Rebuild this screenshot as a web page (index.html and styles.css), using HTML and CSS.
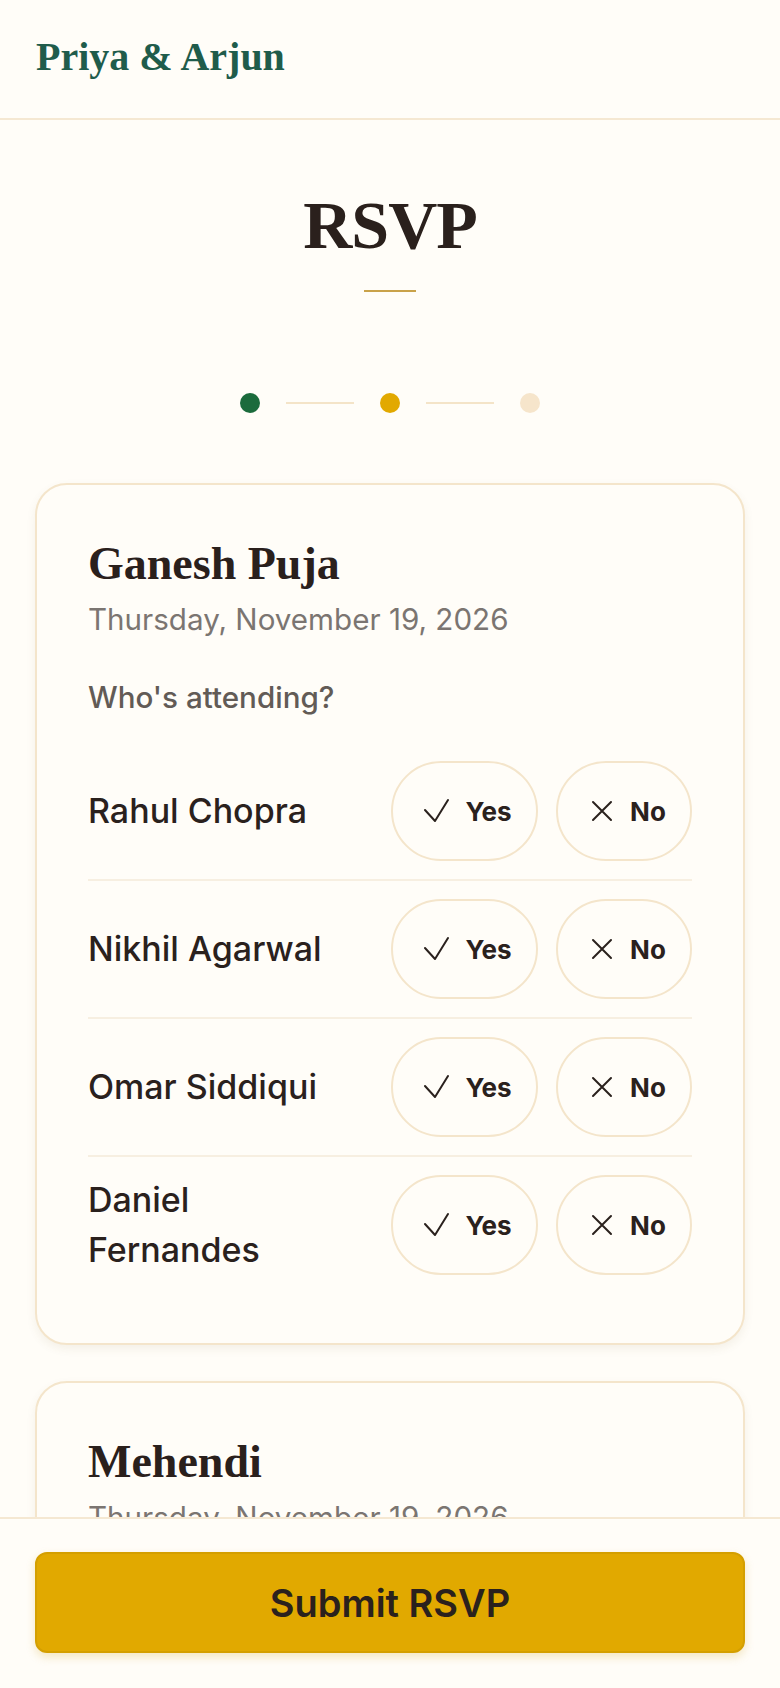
FILE: index.html
```html
<!DOCTYPE html>
<html lang="en">
<head>
<meta charset="utf-8">
<title>RSVP – Priya &amp; Arjun</title>
<link rel="stylesheet" href="styles.css">
</head>
<body>
<div class="app">
<header class="site-header">
  <div class="brand">Priya &amp; Arjun</div>
</header>

<main class="page">
  <section class="intro">
    <h1 class="page-title">RSVP</h1>
    <div class="title-rule"></div>
    <div class="steps">
      <span class="dot dot-done"></span>
      <span class="step-line"></span>
      <span class="dot dot-current"></span>
      <span class="step-line"></span>
      <span class="dot dot-todo"></span>
    </div>
  </section>

  <section class="card">
    <h2 class="event-name">Ganesh Puja</h2>
    <div class="event-date">Thursday, November 19, 2026</div>
    <div class="who">Who's attending?</div>
    <div class="guests">
      <div class="guest">
        <div class="guest-name">Rahul Chopra</div>
        <div class="choices">
          <button class="choice choice-yes"><svg class="ico" viewBox="0 0 26 26" width="26" height="26"><path d="M1 12 L11 23 L24 2"/></svg><span>Yes</span></button>
          <button class="choice choice-no"><svg class="ico" viewBox="0 0 26 26" width="26" height="26"><path d="M4 4 L22 22 M22 4 L4 22"/></svg><span>No</span></button>
        </div>
      </div>
      <div class="guest">
        <div class="guest-name">Nikhil Agarwal</div>
        <div class="choices">
          <button class="choice choice-yes"><svg class="ico" viewBox="0 0 26 26" width="26" height="26"><path d="M1 12 L11 23 L24 2"/></svg><span>Yes</span></button>
          <button class="choice choice-no"><svg class="ico" viewBox="0 0 26 26" width="26" height="26"><path d="M4 4 L22 22 M22 4 L4 22"/></svg><span>No</span></button>
        </div>
      </div>
      <div class="guest">
        <div class="guest-name">Omar Siddiqui</div>
        <div class="choices">
          <button class="choice choice-yes"><svg class="ico" viewBox="0 0 26 26" width="26" height="26"><path d="M1 12 L11 23 L24 2"/></svg><span>Yes</span></button>
          <button class="choice choice-no"><svg class="ico" viewBox="0 0 26 26" width="26" height="26"><path d="M4 4 L22 22 M22 4 L4 22"/></svg><span>No</span></button>
        </div>
      </div>
      <div class="guest">
        <div class="guest-name">Daniel Fernandes</div>
        <div class="choices">
          <button class="choice choice-yes"><svg class="ico" viewBox="0 0 26 26" width="26" height="26"><path d="M1 12 L11 23 L24 2"/></svg><span>Yes</span></button>
          <button class="choice choice-no"><svg class="ico" viewBox="0 0 26 26" width="26" height="26"><path d="M4 4 L22 22 M22 4 L4 22"/></svg><span>No</span></button>
        </div>
      </div>
    </div>
  </section>

  <section class="card">
    <h2 class="event-name">Mehendi</h2>
    <div class="event-date">Thursday, November 19, 2026</div>
    <div class="who">Who's attending?</div>
    <div class="guests">
      <div class="guest">
        <div class="guest-name">Rahul Chopra</div>
        <div class="choices">
          <button class="choice choice-yes"><svg class="ico" viewBox="0 0 26 26" width="26" height="26"><path d="M1 12 L11 23 L24 2"/></svg><span>Yes</span></button>
          <button class="choice choice-no"><svg class="ico" viewBox="0 0 26 26" width="26" height="26"><path d="M4 4 L22 22 M22 4 L4 22"/></svg><span>No</span></button>
        </div>
      </div>
    </div>
  </section>
</main>

<footer class="action-bar">
  <button class="submit">Submit RSVP</button>
</footer>
</div>
</body>
</html>
```

FILE: styles.css
```css
* { box-sizing: border-box; }

html, body {
  margin: 0;
  padding: 0;
  background: #fffdf8;
  overflow: hidden;
}

body {
  font-family: Inter, "Noto Sans", "Liberation Sans", sans-serif;
  color: #2a211d;
}

.app {
  height: 100vh;
  display: flex;
  flex-direction: column;
}

.site-header {
  flex: none;
  padding: 33px 36px 37px;
  border-bottom: 2px solid #f5e8d2;
}

.brand {
  font-family: "Liberation Serif", "DejaVu Serif", serif;
  font-weight: 700;
  font-size: 40px;
  line-height: 48px;
  color: #1f5c4b;
}

.page {
  flex: 1;
  min-height: 0;
  overflow: hidden;
  padding: 0 35px;
}

.intro {
  display: flex;
  flex-direction: column;
  align-items: center;
  padding-top: 64px;
}

.page-title {
  margin: 0;
  font-family: "Liberation Serif", "DejaVu Serif", serif;
  font-weight: 700;
  font-size: 68px;
  line-height: 82px;
  letter-spacing: -1px;
  color: #2a201c;
}

.title-rule {
  width: 52px;
  height: 2px;
  margin-top: 24px;
  background: #c9a24a;
}

.steps {
  display: flex;
  align-items: center;
  gap: 26px;
  margin-top: 101px;
  margin-bottom: 70px;
}

.dot {
  width: 20px;
  height: 20px;
  border-radius: 50%;
}

.dot-done { background: #1b6b3c; }
.dot-current { background: #e2a900; }
.dot-todo { background: #f6e5cb; }

.step-line {
  width: 68px;
  height: 2px;
  background: #f4e4c8;
}

.card {
  background: #fffdf8;
  border: 2px solid #f4e5cb;
  border-radius: 32px;
  padding: 50px 51px;
  box-shadow: 0 4px 10px rgba(120, 90, 40, 0.08);
  margin-bottom: 36px;
}

.event-name {
  margin: 0 0 4px;
  font-family: "Liberation Serif", "DejaVu Serif", serif;
  font-weight: 700;
  font-size: 46px;
  line-height: 58px;
  color: #2a201c;
}

.event-date {
  font-size: 29.6px;
  line-height: 45px;
  color: #7b7571;
}

.who {
  margin-top: 34px;
  margin-bottom: 25px;
  font-size: 29.6px;
  line-height: 42px;
  font-weight: 500;
  color: #625b56;
}

.guest {
  display: flex;
  align-items: center;
  gap: 32px;
  padding: 18px 0;
  border-bottom: 2px solid #f7efe1;
}

.guest:last-child {
  border-bottom: none;
}

.guest-name {
  flex: 1;
  min-width: 0;
  font-size: 34px;
  line-height: 50px;
  font-weight: 500;
  color: #2a211d;
}

.choices {
  display: flex;
  gap: 18px;
}

.choice {
  height: 100px;
  display: flex;
  align-items: center;
  justify-content: center;
  gap: 15px;
  padding: 0 0 0 7px;
  background: transparent;
  border: 2px solid #f4e5cb;
  border-radius: 9999px;
  font-family: Inter, "Noto Sans", "Liberation Sans", sans-serif;
  font-weight: 700;
  font-size: 26px;
  color: #2a211d;
}

.choice-yes { width: 147px; }
.choice-no { width: 136px; }

.ico {
  flex: none;
  fill: none;
  stroke: #2a211d;
  stroke-width: 2;
  stroke-linecap: round;
  stroke-linejoin: round;
}

.action-bar {
  flex: none;
  padding: 33px 35px 35px;
  border-top: 2px solid #f5e8d2;
  background: #fffdf8;
}

.submit {
  display: block;
  width: 100%;
  height: 101px;
  border: 2px solid #d49f00;
  border-radius: 12px;
  background: #e1a900;
  box-shadow: 0 4px 10px rgba(200, 150, 0, 0.22);
  font-family: Inter, "Noto Sans", "Liberation Sans", sans-serif;
  font-weight: 600;
  font-size: 38px;
  color: #2a211d;
}
```
